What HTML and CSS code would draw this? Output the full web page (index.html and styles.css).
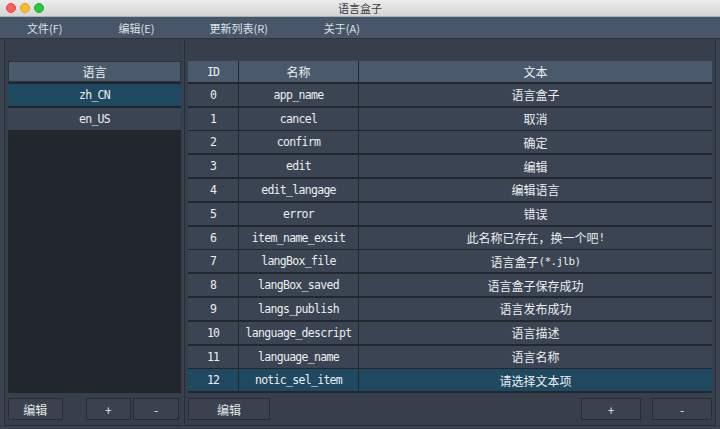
FILE: index.html
```html
<!DOCTYPE html>
<html lang="zh">
<head>
<meta charset="utf-8">
<title>语言盒子</title>
<link rel="stylesheet" href="styles.css">
</head>
<body>
<div class="window">
  <div class="titlebar">
    <div class="lights">
      <span class="light red"></span>
      <span class="light yellow"></span>
      <span class="light green"></span>
    </div>
    <div class="title">语言盒子</div>
  </div>
  <div class="menubar">
    <span class="menu m1">文件(F)</span>
    <span class="menu m2">编辑(E)</span>
    <span class="menu m3">更新列表(R)</span>
    <span class="menu m4">关于(A)</span>
  </div>
  <div class="main">
    <div class="panel left">
      <div class="band"></div>
      <div class="list">
        <div class="cell head">语言</div>
        <div class="cell row sel mono">zh_CN</div>
        <div class="cell row mono">en_US</div>
      </div>
      <div class="buttons">
        <button class="btn b-edit-l">编辑</button>
        <span class="spacer-s"></span>
        <button class="btn b-pm">+</button>
        <button class="btn b-pm">-</button>
      </div>
    </div>
    <div class="divider"></div>
    <div class="panel right">
      <div class="band"></div>
      <div class="table">
        <div class="tr head">
          <div class="td c-id">ID</div><div class="td c-name">名称</div><div class="td c-text">文本</div>
        </div>
        <div class="tr"><div class="td c-id">0</div><div class="td c-name">app_name</div><div class="td c-text">语言盒子</div></div>
        <div class="tr"><div class="td c-id">1</div><div class="td c-name">cancel</div><div class="td c-text">取消</div></div>
        <div class="tr"><div class="td c-id">2</div><div class="td c-name">confirm</div><div class="td c-text">确定</div></div>
        <div class="tr"><div class="td c-id">3</div><div class="td c-name">edit</div><div class="td c-text">编辑</div></div>
        <div class="tr"><div class="td c-id">4</div><div class="td c-name">edit_langage</div><div class="td c-text">编辑语言</div></div>
        <div class="tr"><div class="td c-id">5</div><div class="td c-name">error</div><div class="td c-text">错误</div></div>
        <div class="tr"><div class="td c-id">6</div><div class="td c-name">item_name_exsit</div><div class="td c-text">此名称已存在，换一个吧<span class="hw">!</span></div></div>
        <div class="tr"><div class="td c-id">7</div><div class="td c-name">langBox_file</div><div class="td c-text">语言盒子<span class="hw">(*.jlb)</span></div></div>
        <div class="tr"><div class="td c-id">8</div><div class="td c-name">langBox_saved</div><div class="td c-text">语言盒子保存成功</div></div>
        <div class="tr"><div class="td c-id">9</div><div class="td c-name">langs_publish</div><div class="td c-text">语言发布成功</div></div>
        <div class="tr"><div class="td c-id">10</div><div class="td c-name">language_descript</div><div class="td c-text">语言描述</div></div>
        <div class="tr"><div class="td c-id">11</div><div class="td c-name">language_name</div><div class="td c-text">语言名称</div></div>
        <div class="tr sel"><div class="td c-id">12</div><div class="td c-name">notic_sel_item</div><div class="td c-text">请选择文本项</div></div>
      </div>
      <div class="buttons">
        <button class="btn b-edit-r">编辑</button>
        <span class="grow"></span>
        <button class="btn b-pm-r">+</button>
        <button class="btn b-pm-r gap-l">-</button>
      </div>
    </div>
  </div>
</div>
</body>
</html>
```

FILE: styles.css
```css
* { box-sizing: border-box; }
html, body { margin: 0; padding: 0; }
body {
  width: 720px;
  height: 429px;
  overflow: hidden;
  background: #2c333c;
  font-family: "Noto Sans CJK SC", "Noto Sans", sans-serif;
  color: #eceef0;
}
.window {
  width: 720px;
  height: 429px;
  display: flex;
  flex-direction: column;
  background: #39424e;
}
.titlebar {
  height: 17px;
  position: relative;
  background: linear-gradient(#ececec, #d4d4d4);
  border-bottom: 1px solid #b0b0b0;
  display: flex;
  align-items: center;
  justify-content: center;
}
.lights {
  position: absolute;
  left: 6px;
  top: 3px;
  display: flex;
  gap: 4px;
}
.light {
  width: 10px;
  height: 10px;
  border-radius: 50%;
  display: block;
}
.red { background: #fc5f57; border: 1px solid #e1463f; }
.yellow { background: #fdbc2e; border: 1px solid #de9f22; }
.green { background: #28c840; border: 1px solid #1aab2a; }
.title {
  font-size: 11px;
  color: #3b3b3b;
  line-height: 16px;
}
.menubar {
  height: 22px;
  background: #475769;
  display: flex;
  align-items: center;
  font-size: 11px;
  color: #dde2e8;
  border-bottom: 1px solid #2a323c;
}
.menu { display: block; }
.m1 { margin-left: 27px; }
.m2 { margin-left: 56px; }
.m3 { margin-left: 55px; }
.m4 { margin-left: 56px; }
.hw {
  font-family: "DejaVu Sans Mono", "Liberation Mono", monospace;
  font-size: 11px;
  letter-spacing: -0.6px;
}
.main {
  flex: 1;
  display: flex;
  padding: 0 4px 3px 4px;
  background: #39424e;
}
.panel {
  display: flex;
  flex-direction: column;
  background: #363f4b;
  border-left: 1px solid #262d36;
  border-bottom: 1px solid #262d36;
}
.left { width: 179px; padding: 0 2px 4px 3px; }
.right { flex: 1; padding: 0 3px 4px 3px; border-right: 1px solid #262d36; }
.divider { width: 1px; }
.band { height: 22px; flex: none; }
.list {
  height: 332px;
  background: #22272e;
  display: flex;
  flex-direction: column;
  gap: 2px;
}
.cell {
  height: 22px;
  display: flex;
  align-items: center;
  justify-content: center;
  font-size: 12px;
}
.cell.head { height: 21px; background: #4a5a6c; border: 1px solid #2b333d; }
.cell.row { background: #3a4452; height: 22px; }
.cell.sel { background: #1f4861; }
.cell.mono {
  font-family: "DejaVu Sans Mono", "Liberation Mono", monospace;
  font-size: 11.5px;
  letter-spacing: -0.7px;
}
.table {
  height: 332px;
  width: 524px;
  background: #22272e;
  display: flex;
  flex-direction: column;
  gap: 1.8px;
}
.tr {
  display: flex;
  height: 22px;
  gap: 1px;
  flex: none;
}
.tr.head { height: 21px; }
.td {
  background: #3a4452;
  display: flex;
  align-items: center;
  justify-content: center;
  font-size: 12px;
  white-space: pre;
}
.tr.head .td { background: #4a5a6c; }
.tr.sel .td { background: #1f4861; }
.td.c-id {
  width: 50px;
  font-family: "DejaVu Sans Mono", "Liberation Mono", monospace;
  font-size: 11.5px;
  letter-spacing: -1px;
}
.td.c-name {
  width: 119px;
  font-family: "DejaVu Sans Mono", "Liberation Mono", monospace;
  font-size: 11.5px;
  letter-spacing: -0.7px;
}
.tr.head .td.c-name { font-family: "Noto Sans CJK SC", sans-serif; font-size: 12px; letter-spacing: 0; }
.td.c-text { flex: 1; }
.buttons {
  display: flex;
  align-items: center;
  margin-top: 5px;
  height: 22px;
}
.btn {
  height: 22px;
  background: #39424e;
  border: 1px solid #262d36;
  color: #e4e7ea;
  font-family: "Noto Sans CJK SC", sans-serif;
  font-size: 12px;
  padding: 0;
  display: flex;
  align-items: center;
  justify-content: center;
}
.b-edit-l { width: 55px; }
.spacer-s { width: 23px; }
.b-pm { width: 46px; margin-right: 2px; }
.b-edit-r { width: 82px; }
.grow { flex: 1; }
.b-pm-r { width: 60px; }
.gap-l { margin-left: 11px; }
```
